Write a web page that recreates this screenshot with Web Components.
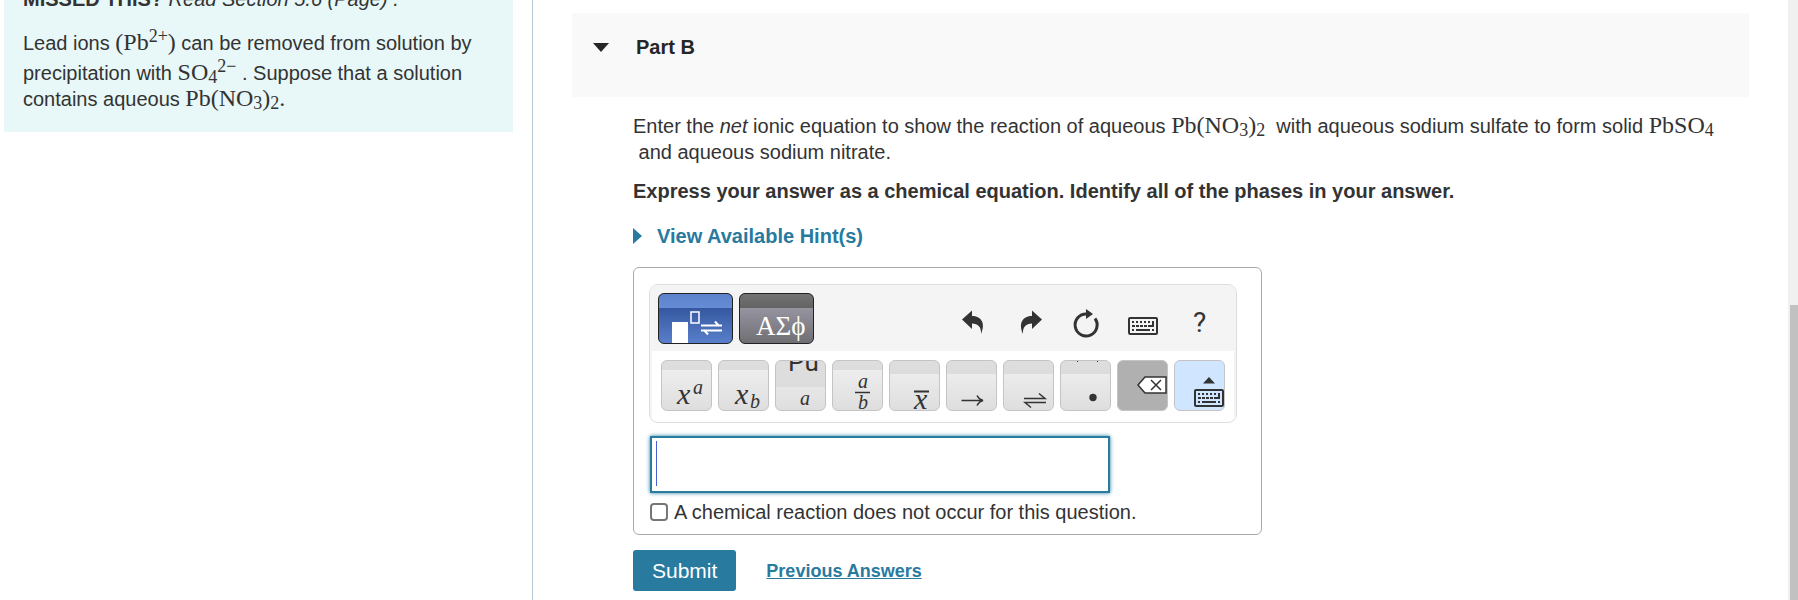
<!DOCTYPE html>
<html lang="en">
<head>
<meta charset="utf-8">
<title>Part B</title>
<style>
html, body { margin: 0; height: 100%; }
body { font: 20px/26px "Liberation Sans", Arial, sans-serif; color: #333; background: #fff; overflow: hidden; }
</style>
</head>
<body>
<study-page>
  <problem-intro slot="intro">
    <span slot="missed"><b>MISSED THIS?</b> <i>Read Section 5.6 (Page) .</i></span>
  </problem-intro>
  <problem-part slot="part" heading="Part B"></problem-part>
</study-page>

<script>
function define(name, html) {
  customElements.define(name, class extends HTMLElement {
    constructor() {
      super();
      const t = document.createElement('template');
      t.innerHTML = html;
      this.attachShadow({ mode: 'open' }).append(t.content.cloneNode(true));
    }
    connectedCallback() {
      for (const el of this.shadowRoot.querySelectorAll('[data-attr]'))
        el.textContent = this.getAttribute(el.dataset.attr) || '';
    }
  });
}

define('chem-formula', `
<style>
:host { display: inline-block; font: 24px/24px "Liberation Serif", "Times New Roman", serif; white-space: nowrap; }
:host([charged]) { padding-top: 4px; }
::slotted(sub), ::slotted(sup) { font-size: 18px; line-height: 0; }
::slotted(sub) { vertical-align: -3px; }
::slotted(sup) { vertical-align: 8px; }
</style><slot></slot>`);

define('problem-intro', `
<style>
:host { display: block; box-sizing: border-box; background: #e8f7f7; padding: 0 19px 20px; overflow: hidden; }
p { margin: 0; }
.missed { margin-top: -14px; }
.text { margin-top: 14px; line-height: 25px; }
</style>
<p class="missed"><slot name="missed"></slot></p>
<p class="text">Lead ions <chem-formula charged>(Pb<sup>2+</sup>)</chem-formula> can be removed from solution by<br>
precipitation with <chem-formula charged>SO<sub>4</sub><sup>2−</sup></chem-formula> . Suppose that a solution<br>
contains aqueous <chem-formula>Pb(NO<sub>3</sub>)<sub>2</sub>.</chem-formula></p>`);

define('tool-key', `
<style>
:host { display: block; }
button { display: block; box-sizing: border-box; width: 51px; height: 51px; padding: 0; border: 1px solid #c4c4c4; border-radius: 6px; overflow: hidden; color: #333;
  background: linear-gradient(#dedede, #dcdcdc) 0 0 / 100% var(--band, 13px) no-repeat, linear-gradient(#f1f1f1, #dedede); }
:host([wide]) button { width: 75px; border-color: #222; }
:host([tone=blue]) button { background: linear-gradient(#5d82cc, #668cd6) 0 0 / 100% 14px no-repeat, linear-gradient(#3558a0 14px, #5a7fcb); }
:host([tone=grey]) button { background: linear-gradient(#737373, #636363) 0 0 / 100% 14px no-repeat, linear-gradient(#9694a0 14px, #6f6f73); }
:host([tone=dark]) button { background: #b0b0b0; }
:host([tone=sky]) button { background: #d0e5ff; }
:host([plain]) button { width: 32px; height: 32px; border: 0; background: none; }
</style>
<button type="button"><slot></slot></button>`);

const keyboard = `<rect x="1" y="1" width="28" height="16" rx="1" fill="none" stroke="#333" stroke-width="2"/>
<g fill="none" stroke="#333" stroke-width="2"><path d="M4 5H23" stroke-dasharray="2 2"/><path d="M4 9H22" stroke-dasharray="3 1"/><path d="M4 13h2M8 13h14M24 13h2M25 4v5h-4"/></g>`;

define('equation-toolbar', `
<style>
:host { display: block; box-sizing: border-box; max-width: 588px; border: 1px solid #ddd; border-radius: 9px; background: #fff; overflow: hidden; }
.top { display: flex; align-items: flex-start; gap: 6px; padding: 8px 19px 7px 8px; background: #f4f4f4; }
.actions { display: flex; gap: 25px; margin: 14px 0 0 auto; }
.keys { display: flex; gap: 6px; padding: 9px 9px 11px; border: solid #f4f4f4; border-width: 0 2px; }
svg { display: block; }
text { font-family: "Liberation Serif", "Times New Roman", serif; fill: #333; }
.it { font-style: italic; }
</style>
<div class="top">
  <tool-key wide tone="blue"><svg width="73" height="49" viewBox="0 0 73 49"><path d="M13 28h16v21H13z" fill="#fff"/><path d="M32 18h8v11h-8z" fill="none" stroke="#fff" stroke-width="1.500"/><path d="M42 31.500H63M60 32l-4-4.500M63 36.500H42M45 36l4 4.500" fill="none" stroke="#fff" stroke-width="2"/></svg></tool-key>
  <tool-key wide tone="grey"><svg width="73" height="49" viewBox="0 0 73 49"><text x="16" y="41" font-size="27" style="fill:#fff">ΑΣϕ</text></svg></tool-key>
  <div class="actions">
    <tool-key plain><svg width="32" height="32" viewBox="0 0 32 32"><path d="M5 12.500 15 3.500v5.500C24 9 29 16 24 27 24.500 20 21 16.500 15 16.500V22z" fill="#333"/></svg></tool-key>
    <tool-key plain><svg width="32" height="32" viewBox="0 0 32 32"><path d="M28 12.500 18 3.500v5.500C9 9 4 16 9 27 8.500 20 12 16.500 18 16.500V22z" fill="#333"/></svg></tool-key>
    <tool-key plain><svg width="32" height="32" viewBox="0 0 32 32"><path d="M24 11.500A11 11 0 1 1 15.500 7" fill="none" stroke="#333" stroke-width="3"/><path d="M15 2l7 5-7 5z" fill="#333"/></svg></tool-key>
    <tool-key plain><svg width="32" height="32" viewBox="0 0 32 32"><g transform="translate(0 10)">${keyboard}</g></svg></tool-key>
    <tool-key plain><svg width="32" height="32" viewBox="0 0 32 32"><text x="8" y="25" font-size="28" style="font-family:Roboto,sans-serif">?</text></svg></tool-key>
  </div>
</div>
<div class="keys">
  <tool-key style="--band:9px"><svg width="49" height="49" viewBox="0 0 49 49"><text class="it" x="15" y="43" font-size="30">x</text><text class="it" x="31" y="33" font-size="20">a</text></svg></tool-key>
  <tool-key style="--band:9px"><svg width="49" height="49" viewBox="0 0 49 49"><text class="it" x="16" y="43" font-size="30">x</text><text class="it" x="31" y="47" font-size="20">b</text></svg></tool-key>
  <tool-key style="--band:26px"><svg width="49" height="49" viewBox="0 0 49 49"><text x="12" y="10" font-size="26" style="font-family:Roboto,sans-serif">Pu</text><text class="it" x="24" y="44" font-size="20">a</text></svg></tool-key>
  <tool-key style="--band:9px"><svg width="49" height="49" viewBox="0 0 49 49"><text class="it" x="25" y="27" font-size="20">a</text><path d="M22 31.500H37" stroke="#333" stroke-width="1.500"/><text class="it" x="25" y="48" font-size="20">b</text></svg></tool-key>
  <tool-key><svg width="49" height="49" viewBox="0 0 49 49"><path d="M24 30.500H39" stroke="#333" stroke-width="2"/><text class="it" x="24" y="48" font-size="30">x</text></svg></tool-key>
  <tool-key><svg width="49" height="49" viewBox="0 0 49 49"><path d="M14.500 39.500H35M30 34.500q2 4 6 5-4 1-6 5" fill="none" stroke="#333" stroke-width="1.500"/></svg></tool-key>
  <tool-key><svg width="49" height="49" viewBox="0 0 49 49"><path d="M20 37.500H41l-6-5M42 41.500H21l6 5" fill="none" stroke="#333" stroke-width="1.500"/></svg></tool-key>
  <tool-key><svg width="49" height="49" viewBox="0 0 49 49"><circle cx="32" cy="36.500" r="3.700" fill="#333"/><path d="M16 0h1v1h-1zM36 0h1v1h-1z" fill="#333"/></svg></tool-key>
  <tool-key tone="dark"><svg width="49" height="49" viewBox="0 0 49 49"><path d="M20 24 27 16H48V32H27z" fill="#fff" stroke="#333" stroke-width="1.500"/><path d="M33 19l10 10M43 19 33 29" stroke="#333" stroke-width="1.500"/></svg></tool-key>
  <tool-key tone="sky"><svg width="49" height="49" viewBox="0 0 49 49"><path d="M28 22.500 34 16l6 6.500z" fill="#333"/><g transform="translate(19 28)">${keyboard}</g></svg></tool-key>
</div>`);

define('answer-box', `
<style>
:host { display: block; box-sizing: border-box; max-width: 629px; border: 1px solid #aaa; border-radius: 6px; padding: 16px 15px 9px; }
.field { display: block; box-sizing: border-box; width: 100%; max-width: 460px; height: 57px; margin: 13px 0 6px 1px; padding: 0 4px; border: 2px solid #287a9f; border-radius: 0; outline: 0; font: 40px/45px "Liberation Sans", Arial, sans-serif; caret-color: #4461d7; box-shadow: 0 0 4px #287a9f;
  background: linear-gradient(#4461d7, #4461d7) 4px 3px / 1px 45px no-repeat #fff; }
.check { display: flex; align-items: center; gap: 6px; line-height: 26px; }
input[type=checkbox] { appearance: none; box-sizing: border-box; width: 18px; height: 18px; margin: 0 0 0 1px; border: 2px solid #767676; border-radius: 4px; background: #fff; }
</style>
<equation-toolbar></equation-toolbar>
<input class="field" type="text" aria-label="Answer">
<label class="check"><input type="checkbox">A chemical reaction does not occur for this question.</label>`);

define('part-header', `
<style>
:host { display: flex; align-items: flex-start; gap: 27px; box-sizing: border-box; height: 84px; padding: 21px; background: #f9f9f9; color: #262626; }
h2 { margin: 0; font-size: 20px; line-height: 26px; }
svg { margin-top: 9px; }
</style>
<svg width="16" height="9" viewBox="0 0 16 9"><path d="M0 0h16L8 9z" fill="#262626"/></svg>
<h2><slot></slot></h2>`);

define('problem-part', `
<style>
:host { display: block; padding-top: 13px; }
.body { padding: 16px 0 0 61px; }
p { margin: 0; }
.directive { margin-top: 13px; font-weight: bold; }
.hints { display: flex; align-items: center; gap: 15px; margin: 19px 0 18px; color: #287a9f; font-weight: bold; text-decoration: none; }
.actions { display: flex; align-items: center; gap: 30px; margin-top: 15px; }
.submit { height: 41px; padding: 0 19px; border: 0; border-radius: 3px; background: #287a9f; color: #fff; font: 21px "Liberation Sans", Arial, sans-serif; }
.previous { color: #287a9f; font-size: 18px; font-weight: bold; }
</style>
<part-header><span data-attr="heading"></span></part-header>
<div class="body">
  <p>Enter the <i>net</i> ionic equation to show the reaction of aqueous <chem-formula>Pb(NO<sub>3</sub>)<sub>2</sub></chem-formula>&nbsp; with aqueous sodium sulfate to form solid <chem-formula>PbSO<sub>4</sub></chem-formula><br>&nbsp;and aqueous sodium nitrate.</p>
  <p class="directive">Express your answer as a chemical equation. Identify all of the phases in your answer.</p>
  <a class="hints" href="#hints"><svg width="9" height="16" viewBox="0 0 9 16"><path d="M0 0v16l9-8z" fill="#287a9f"/></svg>View Available Hint(s)</a>
  <answer-box></answer-box>
  <div class="actions"><button class="submit" type="button">Submit</button><a class="previous" href="#previous">Previous Answers</a></div>
</div>`);

define('study-page', `
<style>
:host { display: grid; grid-template-columns: 533px 1fr 10px; height: 100vh; overflow: hidden; }
aside { border-right: 1px solid #b9c8d8; padding: 0 19px 0 4px; }
main { padding: 0 39px; min-width: 0; }
.track { background: #f0f0f0; padding: 305px 0 0 2px; box-sizing: border-box; display: flex; }
.thumb { flex: 1; background: #c1c1c1; }
</style>
<aside><slot name="intro"></slot></aside>
<main><slot name="part"></slot></main>
<div class="track"><div class="thumb"></div></div>`);
</script>
</body>
</html>
